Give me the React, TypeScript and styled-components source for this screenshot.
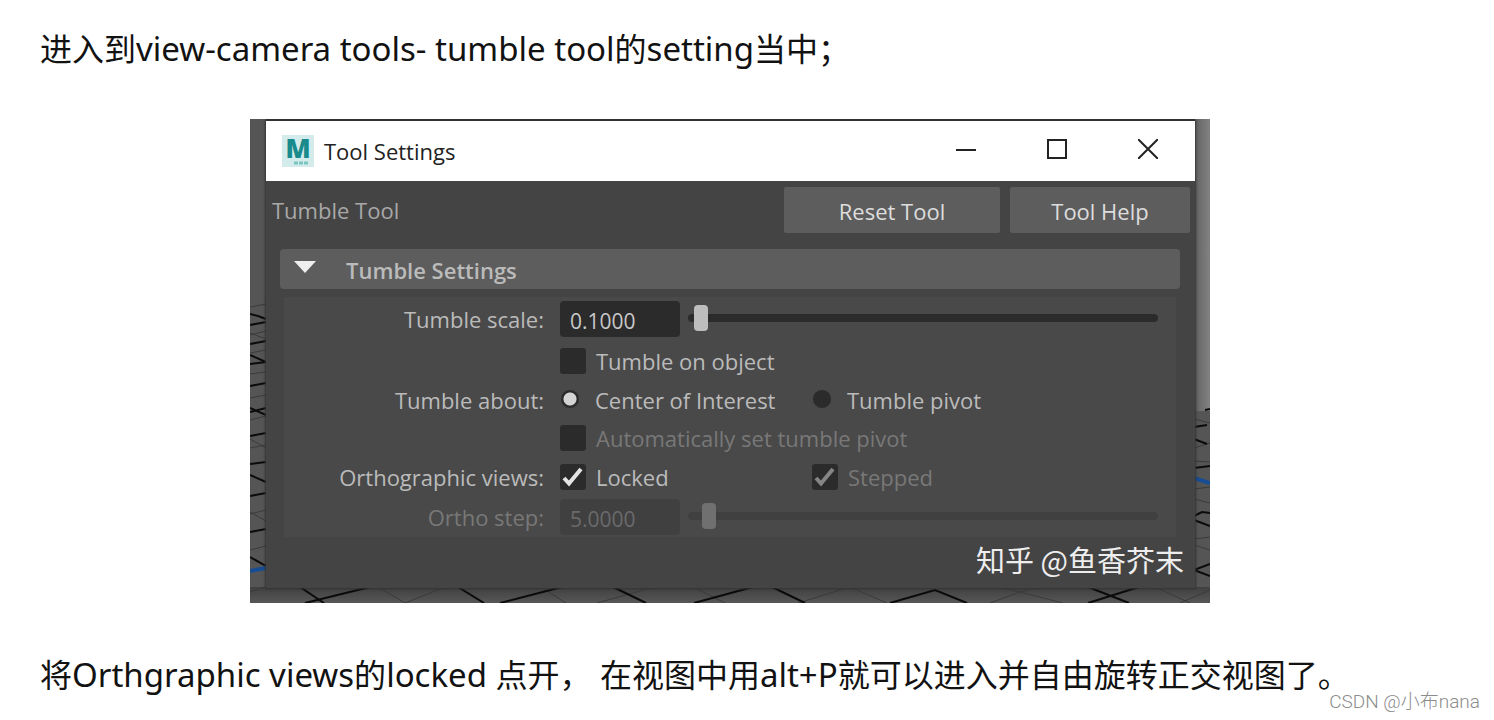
import React, { useState } from "react";
import styled, { createGlobalStyle, css } from "styled-components";

const GlobalStyle = createGlobalStyle`
  * { box-sizing: border-box; }
  body {
    margin: 0;
    background: #fff;
    color: #121212;
    font-family: "Open Sans", "Noto Sans CJK SC", sans-serif;
  }
`;

const Page = styled.main`
  position: relative;
  min-height: 100vh;
  padding: 25px 74px 16px 40px;
`;

const Paragraph = styled.p`
  margin: 0;
  font-family: "Noto Sans", "Noto Sans CJK SC", sans-serif;
  font-size: 32px;
  line-height: 48px;
`;

const Latin = styled.span`
  font-size: 33px;
  line-height: 1;
`;

const Figure = styled.figure`
  position: relative;
  max-width: 960px;
  margin: 46px auto 48px;
  padding: 2px 15px 15px 16px;
  overflow: hidden;
  background: #555;
`;

const Viewport = styled.svg`
  position: absolute;
  inset: 0;
  width: 100%;
  height: 100%;
`;

const Window = styled.section`
  position: relative;
  background: #444;
  box-shadow: 0 0 2px 1px #333;
`;

const TitleBar = styled.header`
  display: flex;
  align-items: center;
  height: 60px;
  padding: 0 2px 0 16px;
  background: #fff;
  color: #222;
`;

const Logo = styled.svg`
  overflow: visible;
`;

const Title = styled.h1`
  flex: 1;
  margin: 0 0 0 10px;
  font-size: 22px;
  font-weight: 500;
  line-height: 32px;
`;

const CaptionButton = styled.button`
  display: grid;
  place-items: center;
  width: 91px;
  height: 60px;
  padding: 0 0 4px;
  border: 0;
  background: none;
`;

const Toolbar = styled.div`
  display: flex;
  align-items: center;
  gap: 10px;
  padding: 6px 5px 16px 6px;
`;

const ToolName = styled.span`
  flex: 1;
  color: #a8a8a8;
  font-size: 22px;
  font-weight: 500;
  line-height: 28px;
`;

const PushButton = styled.button<{ $width: number }>`
  width: ${(p) => p.$width}px;
  height: 46px;
  padding: 2px 0 0;
  border: 0;
  border-radius: 2px;
  background: #5d5d5d;
  color: #ddd;
  font: 500 22px "Open Sans", sans-serif;
`;

const SectionHeader = styled.button`
  display: flex;
  align-items: center;
  gap: 30px;
  width: calc(100% - 29px);
  height: 40px;
  margin: 0 15px 8px 14px;
  padding: 2px 14px 0;
  border: 0;
  border-radius: 4px;
  background: #5d5d5d;
  color: #bbb;
  font: 600 22px "Open Sans", sans-serif;
`;

const Group = styled.div`
  margin: 0 19px 0 18px;
  padding-right: 18px;
  background: #494949;
`;

const Row = styled.div<{ $height: number }>`
  display: grid;
  grid-template-columns: 260px 1fr;
  column-gap: 16px;
  align-items: center;
  height: ${(p) => p.$height}px;
`;

const labelText = css<{ $dim?: boolean }>`
  color: ${(p) => (p.$dim ? "#787878" : "#bbb")};
  font-size: 22px;
  font-weight: 500;
  line-height: 28px;
  white-space: nowrap;
`;

const RowLabel = styled.label<{ $dim?: boolean }>`
  ${labelText}
  grid-column: 1;
  text-align: right;
`;

const Controls = styled.div`
  display: flex;
  grid-column: 2;
  align-items: center;
  gap: 8px;
`;

const Options = styled.div`
  display: grid;
  grid-column: 2;
  grid-template-columns: 252px 1fr;
`;

const Option = styled.label<{ $dim?: boolean }>`
  ${labelText}
  display: flex;
  align-items: center;
  gap: 10px;
`;

const NumberField = styled.input`
  width: 120px;
  height: 36px;
  padding: 4px 10px 0;
  border: 0;
  border-radius: 4px;
  background: #2b2b2b;
  color: #c8c8c8;
  font: 400 21px "Open Sans", sans-serif;
  &:disabled {
    background: #404040;
    color: #6a6a6a;
  }
`;

const Slider = styled.input`
  flex: 1;
  min-width: 0;
  height: 26px;
  margin: 0 0 3px;
  appearance: none;
  background: none;
  &::-webkit-slider-runnable-track {
    height: 8px;
    border-radius: 4px;
    background: #2b2b2b;
  }
  &::-webkit-slider-thumb {
    appearance: none;
    width: 14px;
    height: 26px;
    margin-top: -9px;
    border-radius: 4px;
    background: #bdbdbd;
  }
  &:disabled::-webkit-slider-runnable-track { background: #404040; }
  &:disabled::-webkit-slider-thumb { background: #707070; }
`;

const Tick = styled.input`
  flex: none;
  width: 26px;
  height: 26px;
  margin: 0;
  appearance: none;
  border-radius: 3px;
  background: #2b2b2b;
`;

const TickBox = styled.span<{ $dim?: boolean }>`
  display: grid;
  flex: none;
  > * { grid-area: 1 / 1; }
  svg {
    pointer-events: none;
    stroke: ${(p) => (p.$dim ? "#858585" : "#e4e4e4")};
  }
`;

const Radio = styled.input`
  flex: none;
  width: 20px;
  height: 20px;
  margin: 0 5px 2px 0;
  appearance: none;
  border: 1px solid #494949;
  border-radius: 50%;
  background: #2b2b2b;
  &:checked {
    background: radial-gradient(circle, #d4d4d4 6px, #2b2b2b 7px);
  }
`;

const Credit = styled.div`
  padding: 0 11px 7px;
  color: #eee;
  font-family: "Noto Sans CJK SC", sans-serif;
  font-size: 29px;
  line-height: 44px;
  text-align: right;
`;

const Watermark = styled.span`
  position: absolute;
  right: 14px;
  bottom: 6px;
  color: #8c8c8c;
  font-family: Roboto, "Noto Sans CJK SC", sans-serif;
  font-size: 19px;
  font-weight: 300;
  line-height: 24px;
`;

const heavyLines = [
  // left edge
  "M0 195 8 197 16 200", "M0 206 16 203", "M0 225 16 222", "M0 236 16 243", "M0 245 16 243",
  "M0 267 16 264", "M0 289 16 296", "M0 293 16 289", "M0 317 16 314", "M0 345 16 343",
  "M0 356 16 363", "M0 377 16 374", "M0 413 16 410", "M0 438 16 447",
  // right edge
  "M955 291 960 290", "M944 308 957 306", "M944 320 957 325", "M944 349 960 347",
  "M944 397 952 393 960 394", "M944 401 960 407", "M960 445 944 451 960 457",
  // below the window
  "M50 468 74 484", "M55 484 120 468", "M208 468 234 484", "M250 484 312 468",
  "M363 468 396 484", "M444 484 503 468", "M522 468 555 484",
  "M640 484 685 471 717 484", "M838 484 889 468", "M838 468 879 484",
];

const lightLines = [
  "M0 188 16 185", "M0 214 16 220", "M0 216 16 212", "M0 234 16 231", "M0 255 16 253",
  "M0 279 16 276", "M0 301 16 297", "M0 320 16 329", "M0 329 16 326", "M0 393 16 402",
  "M0 395 16 391", "M0 431 16 427", "M0 473 16 468",
  "M944 300 960 304", "M944 329 960 324", "M944 342 960 343", "M944 370 960 368",
  "M944 380 960 384", "M944 420 960 418", "M944 426 960 431",
  "M128 468 155 484 195 468", "M294 470 316 484", "M347 484 404 468", "M443 468 475 484",
  "M548 484 600 468 637 484", "M740 484 770 473 790 468", "M750 468 813 484",
  "M905 468 940 484", "M930 484 960 471",
];

const Scene = () => (
  <Viewport viewBox="0 0 960 484" preserveAspectRatio="none" aria-hidden="true">
    <defs>
      <linearGradient id="sky" x1="0" x2="1">
        <stop offset="0" stopColor="#606060" />
        <stop offset="1" stopColor="#838383" />
      </linearGradient>
      <linearGradient id="floor" x1="0" x2="0" y1="0" y2="1">
        <stop offset="0" stopColor="#404040" />
        <stop offset="1" stopColor="#575757" />
      </linearGradient>
    </defs>
    <rect width="960" height="484" fill="#555" />
    <rect x="944" width="16" height="292" fill="url(#sky)" />
    <rect y="468" width="960" height="16" fill="url(#floor)" />
    <rect x="16" width="929" height="2" fill="#333" />
    <g fill="none">
      <g stroke="#3b3b3b" strokeWidth="1">
        {lightLines.map((d) => <path key={d} d={d} />)}
      </g>
      <g stroke="#0b0b0b" strokeWidth="2">
        {heavyLines.map((d) => <path key={d} d={d} />)}
      </g>
      <path d="M0 452 16 449M944 359 960 364" stroke="#164d93" strokeWidth="4" />
    </g>
  </Viewport>
);

const AppLogo = () => (
  <Logo width="32" height="32" viewBox="0 0 32 32" aria-hidden="true">
    <rect width="32" height="32" fill="#d3ebeb" />
    <text x="16" y="23" textAnchor="middle" fontFamily="Open Sans" fontSize="26" fontWeight="800" fill="#198b8d">M</text>
    <path d="M12 28h4m1 0h4m1 0h4" stroke="#7cc6c2" strokeWidth="3" />
  </Logo>
);

const Checkbox = ({ label, dim, ...rest }: { label: string; dim?: boolean; defaultChecked?: boolean; disabled?: boolean }) => {
  const [on, setOn] = useState(!!rest.defaultChecked);
  return (
    <Option $dim={dim}>
      <TickBox $dim={dim}>
        <Tick type="checkbox" checked={on} disabled={rest.disabled} onChange={(e) => setOn(e.target.checked)} />
        {on && (
          <svg width="26" height="26" viewBox="0 0 26 26" fill="none" strokeWidth="4">
            <path d="M4 14 9 19.500 21 5" />
          </svg>
        )}
      </TickBox>
      {label}
    </Option>
  );
};

export default function App() {
  return (
    <Page>
      <GlobalStyle />
      <Paragraph>
        进入到<Latin>view-camera tools- tumble tool</Latin>的<Latin>setting</Latin>当中；
      </Paragraph>
      <Figure>
        <Scene />
        <Window>
          <TitleBar>
            <AppLogo />
            <Title>Tool Settings</Title>
            <CaptionButton aria-label="Minimize">
              <svg width="20" height="20" stroke="#222" strokeWidth="2"><path d="M0 11h20" /></svg>
            </CaptionButton>
            <CaptionButton aria-label="Maximize">
              <svg width="20" height="20" fill="none" stroke="#222" strokeWidth="2"><rect x="1" y="1" width="18" height="18" /></svg>
            </CaptionButton>
            <CaptionButton aria-label="Close">
              <svg width="20" height="20" stroke="#222" strokeWidth="2"><path d="m0 0 20 20M20 0 0 20" /></svg>
            </CaptionButton>
          </TitleBar>
          <Toolbar>
            <ToolName>Tumble Tool</ToolName>
            <PushButton $width={216}>Reset Tool</PushButton>
            <PushButton $width={180}>Tool Help</PushButton>
          </Toolbar>
          <SectionHeader aria-expanded="true">
            <svg width="22" height="20" viewBox="0 0 22 20" fill="#eee" aria-hidden="true"><path d="M0 1h22L11 13z" /></svg>
            Tumble Settings
          </SectionHeader>
          <Group>
            <Row $height={44}>
              <RowLabel htmlFor="scale">Tumble scale:</RowLabel>
              <Controls>
                <NumberField id="scale" defaultValue="0.1000" />
                <Slider type="range" aria-label="Tumble scale" min={0} max={8} step={0.1} defaultValue={0.1} />
              </Controls>
            </Row>
            <Row $height={40}>
              <Options><Checkbox label="Tumble on object" /></Options>
            </Row>
            <Row $height={38}>
              <RowLabel as="span">Tumble about:</RowLabel>
              <Options>
                <Option><Radio type="radio" name="about" defaultChecked />Center of Interest</Option>
                <Option><Radio type="radio" name="about" />Tumble pivot</Option>
              </Options>
            </Row>
            <Row $height={38}>
              <Options><Checkbox label="Automatically set tumble pivot" dim disabled /></Options>
            </Row>
            <Row $height={40}>
              <RowLabel as="span">Orthographic views:</RowLabel>
              <Options>
                <Checkbox label="Locked" defaultChecked />
                <Checkbox label="Stepped" dim disabled defaultChecked />
              </Options>
            </Row>
            <Row $height={40}>
              <RowLabel htmlFor="step" $dim>Ortho step:</RowLabel>
              <Controls>
                <NumberField id="step" defaultValue="5.0000" disabled />
                <Slider type="range" aria-label="Ortho step" min={0} max={160} defaultValue={5} disabled />
              </Controls>
            </Row>
          </Group>
          <Credit>知乎 @鱼香芥末</Credit>
        </Window>
      </Figure>
      <Paragraph>
        将<Latin>Orthgraphic views</Latin>的<Latin>locked </Latin>点开， 在视图中用<Latin>alt+P</Latin>就可以进入并自由旋转正交视图了。
      </Paragraph>
      <Watermark>CSDN @小布nana</Watermark>
    </Page>
  );
}
